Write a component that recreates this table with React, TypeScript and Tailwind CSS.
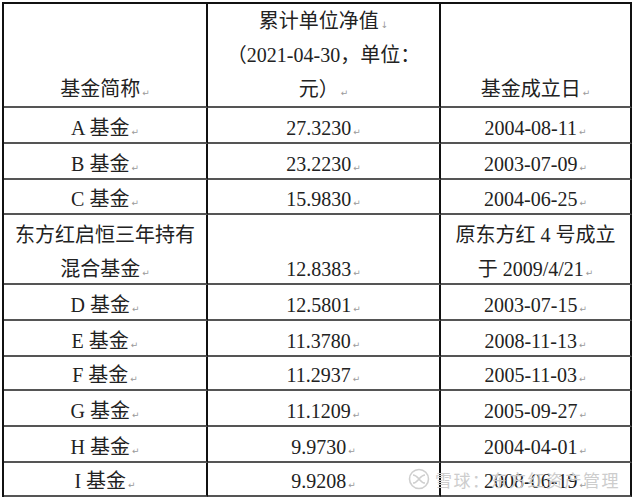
import React from "react";

const mark = "text-[9px] text-[#9a9a9a] ml-[2px] font-['DejaVu_Sans',sans-serif]";

function Ret() {
  return <span className={mark}>↵</span>;
}

type Row = { name: string; nav: string; date: string; h: string };

const top: Row[] = [
  { name: "A 基金", nav: "27.3230", date: "2004-08-11", h: "h-[34px] leading-[40px]" },
  { name: "B 基金", nav: "23.2230", date: "2003-07-09", h: "h-[34px] leading-[40px]" },
  { name: "C 基金", nav: "15.9830", date: "2004-06-25", h: "h-[33px] leading-[38px]" },
];

const bottom: Row[] = [
  { name: "D 基金", nav: "12.5801", date: "2003-07-15", h: "h-[34px] leading-[40px]" },
  { name: "E 基金", nav: "11.3780", date: "2008-11-13", h: "h-[34px] leading-[40px]" },
  { name: "F 基金", nav: "11.2937", date: "2005-11-03", h: "h-[32px] leading-[36px]" },
  { name: "G 基金", nav: "11.1209", date: "2005-09-27", h: "h-[34px] leading-[40px]" },
  { name: "H 基金", nav: "9.9730", date: "2004-04-01", h: "h-[34px] leading-[40px]" },
  { name: "I 基金", nav: "9.9208", date: "2008-06-19", h: "h-[32px] leading-[36px]" },
];

const td = "border-r-2 border-b-2 border-r-[#111] border-b-[#555] align-bottom text-center p-0";

function Line({ h, children }: { h: string; children: React.ReactNode }) {
  return <div className={`${h} whitespace-nowrap overflow-visible`}>{children}</div>;
}

function DataRow({ r }: { r: Row }) {
  return (
    <tr>
      <td className={td}>
        <Line h={r.h}>
          {r.name}
          <Ret />
        </Line>
      </td>
      <td className={td}>
        <Line h={r.h}>
          {r.nav}
          <Ret />
        </Line>
      </td>
      <td className={td}>
        <Line h={r.h}>
          {r.date}
          <Ret />
        </Line>
      </td>
    </tr>
  );
}

const hd = "h-[34px] leading-[35px]";
const two = "h-[34px] leading-[40px]";

export default function App() {
  return (
    <div className="relative w-[634px] h-[500px] overflow-hidden bg-white pt-[2px] pl-[2px] text-[20px] text-[#222] font-['Liberation_Serif','Noto_Sans_CJK_SC',serif]">
      <table className="table-fixed w-[628px] border-separate border-spacing-0 border-l-2 border-t-2 border-[#111]">
        <colgroup>
          <col className="w-[204px]" />
          <col className="w-[233px]" />
          <col className="w-[191px]" />
        </colgroup>
        <tbody>
          <tr>
            <td className={td}>
              <Line h={hd}>
                基金简称
                <Ret />
              </Line>
            </td>
            <td className={td}>
              <Line h={hd}>
                累计单位净值<span className={mark}>↓</span>
              </Line>
              <Line h={hd}>（2021-04-30，单位：</Line>
              <Line h={hd}>
                元）
                <Ret />
              </Line>
            </td>
            <td className={td}>
              <Line h={hd}>
                基金成立日
                <Ret />
              </Line>
            </td>
          </tr>
          {top.map((r) => (
            <DataRow key={r.name} r={r} />
          ))}
          <tr>
            <td className={td}>
              <Line h={two}>东方红启恒三年持有</Line>
              <Line h={two}>
                混合基金
                <Ret />
              </Line>
            </td>
            <td className={td}>
              <Line h={two}>
                12.8383
                <Ret />
              </Line>
            </td>
            <td className={td}>
              <Line h={two}>原东方红 4 号成立</Line>
              <Line h={two}>
                于 2009/4/21
                <Ret />
              </Line>
            </td>
          </tr>
          {bottom.map((r) => (
            <DataRow key={r.name} r={r} />
          ))}
        </tbody>
      </table>

      {/* watermark over the last row */}
      <div className="pointer-events-none absolute left-[408px] top-[468px] flex items-center gap-[5px] whitespace-nowrap text-[17px] leading-none text-[#cdcdcd] font-['Noto_Sans_CJK_SC',sans-serif]">
        <svg width="22" height="22" viewBox="0 0 22 22" fill="none" stroke="#cfcfcf" strokeWidth="1.6">
          <circle cx="11" cy="11" r="9.5" />
          <path d="M5 7c3 0 5 3 6 4s3 4 6 4" />
          <path d="M5 15c3 0 5-3 6-4s3-4 6-4" />
        </svg>
        <span className="tracking-[1.5px]">雪球：东方红资产管理</span>
      </div>
    </div>
  );
}
